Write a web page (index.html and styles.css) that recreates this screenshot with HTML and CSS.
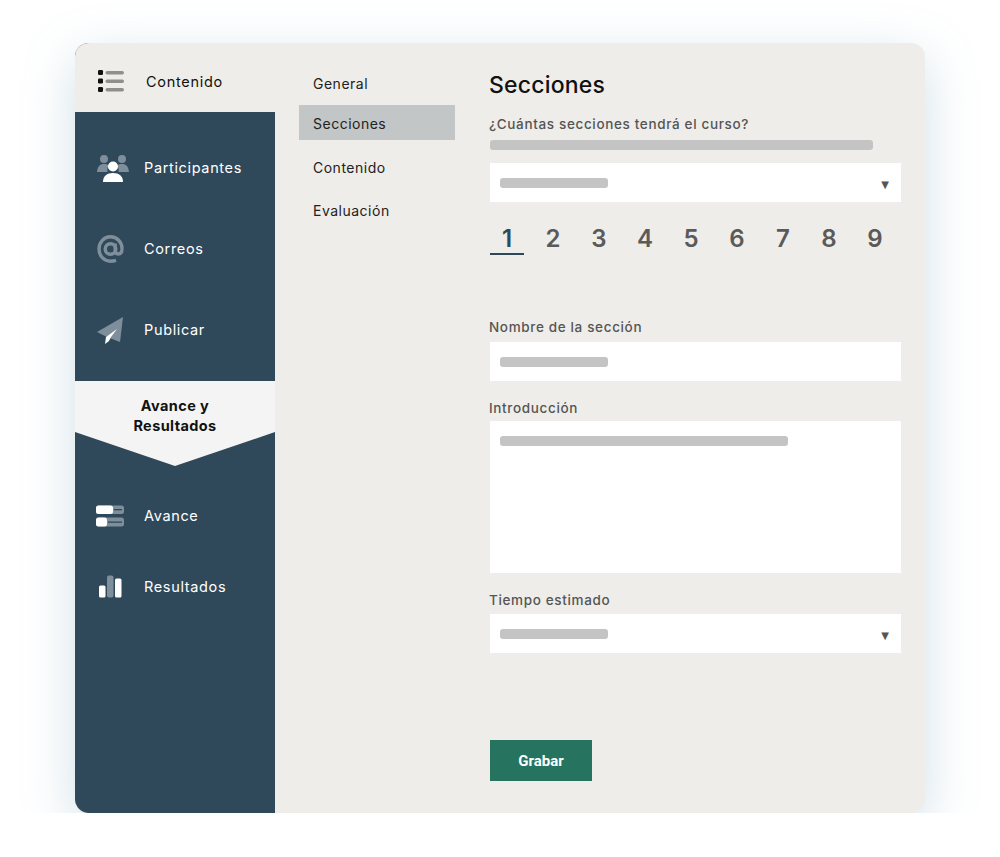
FILE: index.html
```html
<!DOCTYPE html>
<html lang="es">
<head>
  <meta charset="UTF-8">
  <meta name="viewport" content="width=device-width, initial-scale=1.0">
  <title>Secciones</title>
  <link rel="stylesheet" href="styles.css">
</head>
<body>
  <div class="card">

    <!-- Menu lateral -->
    <div class="sidebar">
      <div class="side-head">
        <svg class="head-icon" width="26" height="22" viewBox="0 0 26 22">
          <rect x="0" y="0" width="5" height="5" rx="1.200" fill="#111"/>
          <rect x="0" y="8.500" width="5" height="5" rx="1.200" fill="#111"/>
          <rect x="0" y="17" width="5" height="5" rx="1.200" fill="#111"/>
          <rect x="7.500" y="1" width="18.500" height="3.400" rx="1.700" fill="#8f8f8c"/>
          <rect x="7.500" y="9.500" width="18.500" height="3.400" rx="1.700" fill="#8f8f8c"/>
          <rect x="7.500" y="18" width="18.500" height="3.400" rx="1.700" fill="#8f8f8c"/>
        </svg>
        <span>Contenido</span>
      </div>

      <div class="side-nav">
        <a class="side-item" href="#">
          <svg width="34" height="28" viewBox="0 0 34 28">
            <circle cx="8" cy="5" r="4" fill="#7e8f9b"/>
            <circle cx="26" cy="5" r="4" fill="#7e8f9b"/>
            <path d="M1 18C1.500 12.500 4 10 8 10c2.500 0 4 .7 5 1.600-1.500 1.500-2 3.500-1.500 6.400z" fill="#7e8f9b"/>
            <path d="M33 18c-.5-5.500-3-8-7-8-2.500 0-4 .7-5 1.600 1.500 1.500 2 3.500 1.500 6.400z" fill="#7e8f9b"/>
            <circle cx="17" cy="12.500" r="5" fill="#fff"/>
            <path d="M7 28c0-6 4-9 10-9s10 3 10 9z" fill="#fff"/>
          </svg>
          <span>Participantes</span>
        </a>
        <a class="side-item" href="#">
          <svg width="34" height="28" viewBox="0 0 34 28">
            <path d="M20 25.300c-1.800.6-3.400.9-5.500.9C8 26.200 3 20.700 3 14S8 1.800 14.500 1.800 26 7 26 13.500c0 3.500-1.500 5.500-3.700 5.500-1.900 0-3.100-1.300-3.100-3.500V8.500" fill="none" stroke="#7e8f9b" stroke-width="3.400"/>
            <circle cx="14.500" cy="14" r="5.300" fill="none" stroke="#7e8f9b" stroke-width="3.400"/>
          </svg>
          <span>Correos</span>
        </a>
        <a class="side-item" href="#">
          <svg width="34" height="28" viewBox="0 0 34 28">
            <path d="M27 1 1 16 11 21 24 26z" fill="#7e8f9b"/>
            <path d="M21 13 10 21 9 28 13 25 15 21z" fill="#fff"/>
          </svg>
          <span>Publicar</span>
        </a>
      </div>

      <div class="side-group">Avance y<br>Resultados</div>

      <div class="side-nav-bottom">
        <a class="side-item" href="#">
          <svg width="34" height="28" viewBox="0 0 34 28">
            <rect x="0" y="3.500" width="28" height="8.500" rx="2.500" fill="#7e8f9b"/>
            <rect x="0" y="3.500" width="17" height="8.500" rx="2.500" fill="#fff"/>
            <rect x="18" y="7" width="8" height="1.300" fill="#30495a"/>
            <rect x="0" y="15.500" width="28" height="9" rx="2.500" fill="#7e8f9b"/>
            <rect x="0" y="15.500" width="11" height="9" rx="2.500" fill="#fff"/>
            <rect x="12" y="19.500" width="14" height="1.300" fill="#30495a"/>
          </svg>
          <span>Avance</span>
        </a>
        <a class="side-item" href="#">
          <svg width="34" height="28" viewBox="0 0 34 28">
            <rect x="3" y="12.500" width="6.500" height="12" rx="1.500" fill="#fff"/>
            <rect x="11" y="2.500" width="6.500" height="22" rx="2" fill="#7e8f9b"/>
            <rect x="19" y="5.500" width="6.500" height="19" rx="1.500" fill="#fff"/>
          </svg>
          <span>Resultados</span>
        </a>
      </div>
    </div>

    <!-- Submenu -->
    <div class="submenu">
      <a class="sub-item" href="#">General</a>
      <a class="sub-item active" href="#">Secciones</a>
      <a class="sub-item" href="#">Contenido</a>
      <a class="sub-item" href="#">Evaluación</a>
    </div>

    <!-- Formulario -->
    <div class="content">
      <h1>Secciones</h1>
      <label class="label label-first">¿Cuántas secciones tendrá el curso?</label>
      <div class="bar bar-wide"></div>
      <div class="field select-field">
        <div class="bar"></div>
        <span class="arrow">▼</span>
      </div>

      <div class="steps">
        <span class="step active">1</span>
        <span class="step">2</span>
        <span class="step">3</span>
        <span class="step">4</span>
        <span class="step">5</span>
        <span class="step">6</span>
        <span class="step">7</span>
        <span class="step">8</span>
        <span class="step">9</span>
      </div>

      <label class="label label-name">Nombre de la sección</label>
      <div class="field"><div class="bar"></div></div>

      <label class="label label-intro">Introducción</label>
      <div class="field area"><div class="bar bar-long"></div></div>

      <label class="label label-time">Tiempo estimado</label>
      <div class="field select-field field-time">
        <div class="bar"></div>
        <span class="arrow">▼</span>
      </div>

      <button class="save-btn">Grabar</button>
    </div>
  </div>
</body>
</html>
```

FILE: styles.css
```css
body {
  font-family: Inter, "Open Sans", sans-serif;
  background-color: #fff;
  margin: 0;
  padding: 0;
}

.card {
  display: flex;
  width: 850px;
  height: 770px;
  margin: 43px 75px 0;
  background-color: #eeede9;
  border-radius: 14px;
  overflow: hidden;
  box-shadow: 0 15px 50px rgba(120, 165, 190, 0.35);
}

/* Menu lateral */
.sidebar {
  width: 200px;
  flex-shrink: 0;
  background-color: #30495a;
}

.side-head {
  display: flex;
  align-items: center;
  height: 69px;
  padding-left: 23px;
  padding-top: 7px;
  box-sizing: border-box;
  background-color: #eeede9;
  color: #111;
  font-size: 14.5px;
  letter-spacing: 0.7px;
}

.head-icon {
  margin-right: 22px;
}

.side-nav {
  padding-top: 15px;
}

.side-nav-bottom {
  padding-top: 14px;
}

.side-item {
  display: flex;
  align-items: center;
  height: 81px;
  padding-left: 21px;
  color: #fff;
  font-size: 14.5px;
  letter-spacing: 0.65px;
  text-decoration: none;
}

.side-nav-bottom .side-item {
  height: 71px;
}

.side-item svg {
  margin-right: 14px;
}

.side-group {
  height: 85px;
  margin-top: 11px;
  padding-top: 15px;
  box-sizing: border-box;
  background-color: #f4f4f4;
  clip-path: polygon(0 0, 100% 0, 100% 51px, 50% 100%, 0 51px);
  color: #111;
  font-size: 14.5px;
  font-weight: 700;
  line-height: 20px;
  letter-spacing: 0.4px;
  text-align: center;
}

/* Submenu */
.submenu {
  display: flex;
  flex-direction: column;
  width: 156px;
  flex-shrink: 0;
  margin-left: 24px;
  padding-top: 23px;
}

.sub-item {
  display: flex;
  align-items: center;
  height: 35px;
  margin-top: 8px;
  padding-left: 14px;
  color: #222;
  font-size: 14px;
  letter-spacing: 0.5px;
  text-decoration: none;
}

.sub-item:first-child {
  margin-top: 0;
}

.sub-item.active {
  margin-top: 4px;
  margin-bottom: 2px;
  padding-top: 2px;
  box-sizing: border-box;
  background-color: #c3c6c6;
}

/* Formulario */
.content {
  width: 412px;
  margin-left: 34px;
}

h1 {
  margin: 28px 0 0;
  font-size: 23px;
  font-weight: 500;
  line-height: 28px;
  color: #111;
  letter-spacing: 0.2px;
}

.label {
  display: block;
  color: #555;
  font-size: 13.5px;
  font-weight: 500;
  line-height: 18px;
  letter-spacing: 0.65px;
}

.label-first {
  margin-top: 16px;
}

.label-name {
  margin-top: 62px;
}

.label-intro {
  margin-top: 18px;
}

.label-time {
  margin-top: 18px;
}

.bar {
  width: 108px;
  height: 10px;
  background-color: #c4c4c4;
  border-radius: 3px;
}

.bar-wide {
  width: 383px;
  margin: 7px 0 13px 1px;
}

.bar-long {
  width: 288px;
}

.field {
  display: flex;
  align-items: center;
  justify-content: space-between;
  width: 391px;
  height: 39px;
  margin: 6px 0 0 1px;
  padding: 0 10px;
  background-color: #fff;
}

.bar-wide + .field {
  margin-top: 0;
}

.field-time {
  margin-top: 5px;
}

.area {
  align-items: flex-start;
  padding-top: 15px;
  height: 137px;
  margin-top: 4px;
}

.arrow {
  margin-right: 2px;
  margin-top: 3px;
  color: #555;
  font-family: "DejaVu Sans", sans-serif;
  font-size: 10px;
}

.steps {
  display: flex;
  gap: 12px;
  margin: 18px 0 0 1px;
}

.step {
  width: 34px;
  height: 36px;
  color: #5a5a5a;
  font-size: 24px;
  font-weight: 600;
  line-height: 38px;
  text-align: center;
}

.step.active {
  height: 33px;
  border-bottom: 2px solid #30495a;
  color: #30495a;
}

.save-btn {
  display: block;
  width: 102px;
  height: 41px;
  margin: 87px 0 0 1px;
  background-color: #26735f;
  border: 0;
  color: #fff;
  font-family: Roboto, sans-serif;
  font-size: 15px;
  font-weight: 700;
  cursor: pointer;
}
```
